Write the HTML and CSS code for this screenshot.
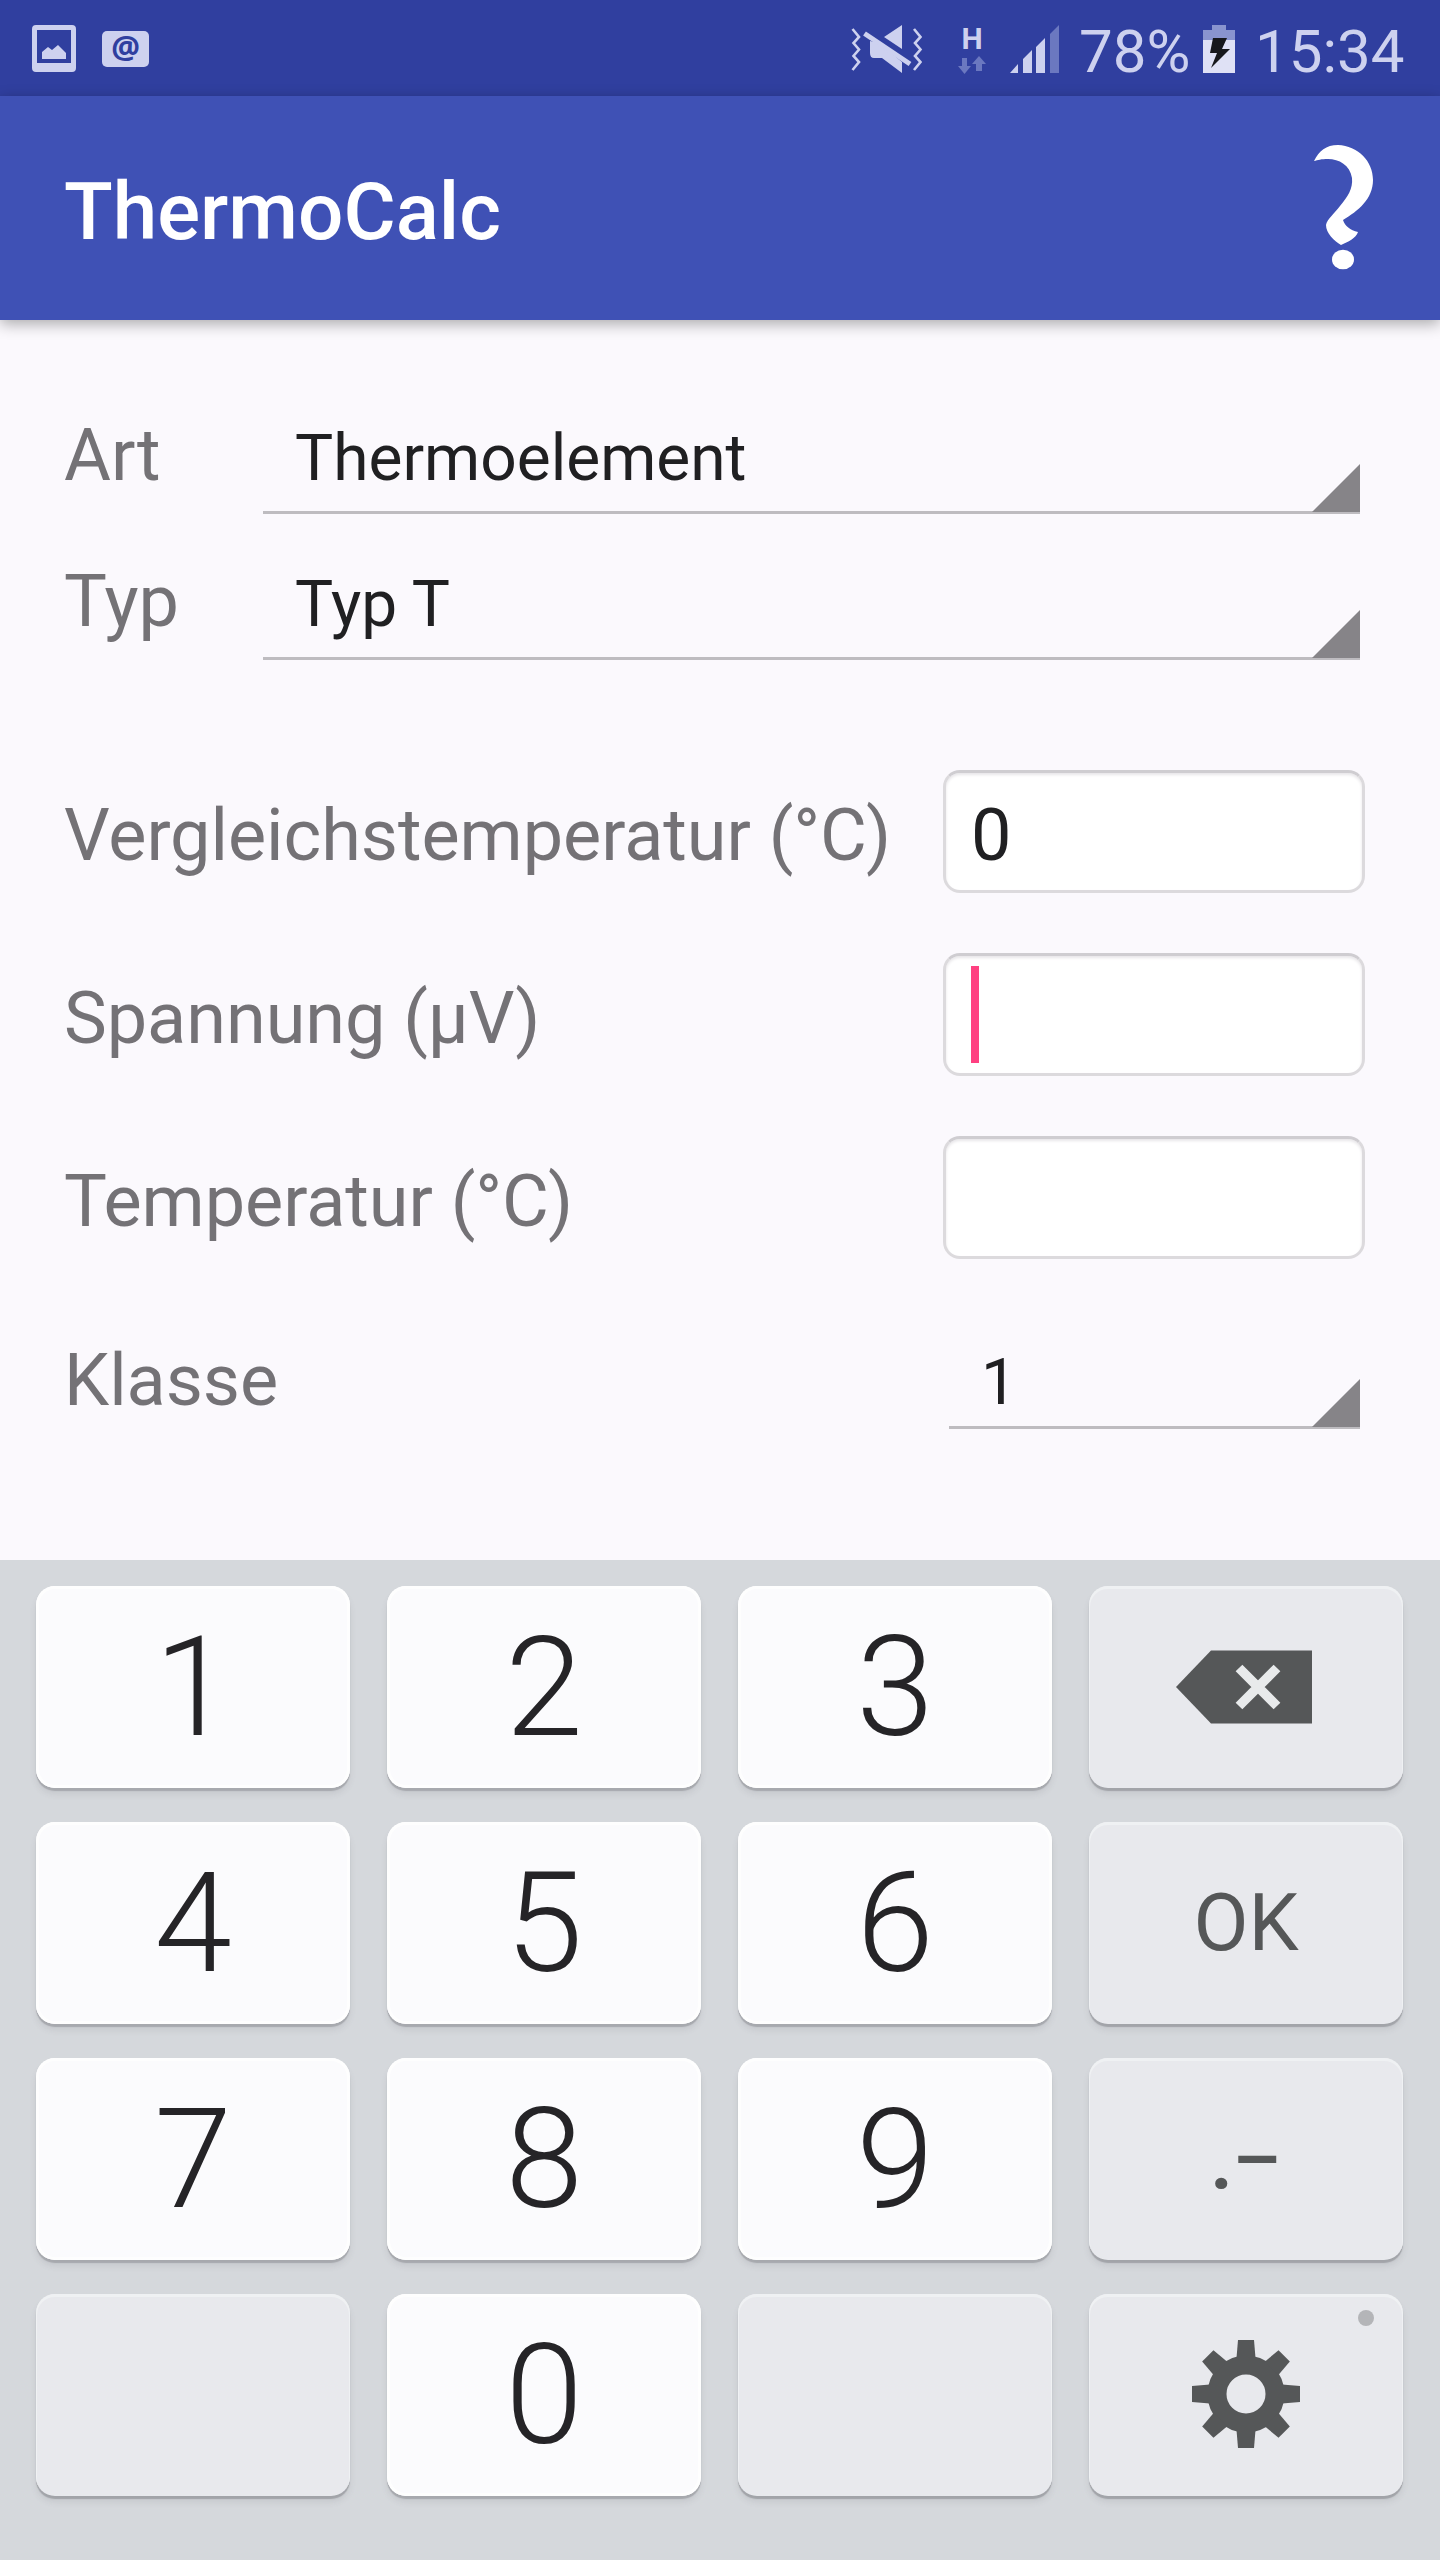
FILE: index.html
```html
<!DOCTYPE html>
<html lang="de">
<head>
<meta charset="utf-8">
<title>ThermoCalc</title>
<link rel="stylesheet" href="styles.css">
</head>
<body>
<div class="phone">
  <div class="status">
    <svg class="ic-picture" width="44" height="48" viewBox="0 0 44 48"><path fill-rule="evenodd" d="M4 0H40Q44 0 44 4V43Q44 47 40 47H4Q0 47 0 43V4Q0 0 4 0ZM5 5V38H39V5ZM10 34V27L16 22L20 25L26 20L34 28V34Z"/></svg>
    <div class="mail"><span>@</span></div>
    <svg class="ic-mute" width="72" height="50" viewBox="0 0 72 50">
      <path d="M1.500 4L8 12L2.500 18L8 24.500L2.500 31L8 37L1.500 45M63 4L69.500 12L64 18L69.500 24.500L64 31L69.500 37L63 45" fill="none" stroke="#cdd1ef" stroke-width="2.600"/>
      <path d="M51 0V24L33 12ZM19 16L28 18L51 37V48L31 33H23Q19 33 19 28Z"/>
      <path d="M13.500 8.500L59 39" stroke="#cdd1ef" stroke-width="5"/>
    </svg>
    <div class="net"><b>H</b>
      <svg width="30" height="18" viewBox="0 0 30 18"><path fill="#6b78c0" d="M5 2H10V10H14L7.500 18L1 10H5ZM19 15V8H15L22 0L29 8H25V15Z"/></svg>
    </div>
    <svg class="ic-signal" width="49" height="48" viewBox="0 0 49 48"><path d="M0 48L8 39V48ZM13 48V34L22 25V48ZM26 48V22L35 13V48Z"/><path fill="#6b78c0" d="M40 48V9L49 0V48Z"/></svg>
    <span class="pct">78%</span>
    <svg class="ic-batt" width="32" height="48" viewBox="0 0 32 48"><path fill="#8994cf" d="M9 0H23V5H32V15H0V5H9Z"/><path fill="#dfe1f5" d="M0 15H32V48H0Z"/><path fill="#17181c" d="M10 13H24L19 24H27L8 43L14 28H7Z"/></svg>
    <span class="time">15:34</span>
  </div>
  <header class="bar">
    <h1>ThermoCalc</h1>
    <svg class="help" width="62" height="128" viewBox="0 0 62 128"><path fill="#fff" d="M2 16C7 6 14 0 26 0C46 1 61 16 61 35C61 54 46 66 31 75C33 81 38 85 46 87C44 93 36 97 29 100C22 96 14 88 14 80C15 74 23 68 28 61C36 51 41 44 40 33C38 20 27 14 16 14C9 14 6 15 2 16Z"/><ellipse cx="31" cy="114.500" rx="11" ry="9.800" fill="#fff"/></svg>
  </header>
  <main class="form">
    <div class="row row-spin"><label>Art</label><div class="spinner wide"><span>Thermoelement</span></div></div>
    <div class="row row-spin"><label>Typ</label><div class="spinner wide"><span>Typ T</span></div></div>
    <div class="row row-in first"><label>Vergleichstemperatur (°C)</label><div class="field">0</div></div>
    <div class="row row-in"><label>Spannung (µV)</label><div class="field"><i class="caret"></i></div></div>
    <div class="row row-in"><label>Temperatur (°C)</label><div class="field"></div></div>
    <div class="row row-spin last"><label>Klasse</label><div class="spinner narrow"><span>1</span></div></div>
  </main>
  <section class="keys">
    <div class="key">1</div><div class="key">2</div><div class="key">3</div>
    <div class="key fn back"><svg width="136" height="74" viewBox="0 0 136 74"><path fill="#555758" d="M0 37L35 .500H136V73.500H35Z"/><path d="M63 18L101 56M101 18L63 56" stroke="#e8eaeb" stroke-width="9.500"/></svg></div>
    <div class="key">4</div><div class="key">5</div><div class="key">6</div>
    <div class="key fn ok">OK</div>
    <div class="key">7</div><div class="key">8</div><div class="key">9</div>
    <div class="key fn punct"><span class="dot">.</span><span class="dash">–</span></div>
    <div class="key fn"></div><div class="key">0</div><div class="key fn"></div>
    <div class="key fn gear"><svg width="110" height="110" viewBox="-55 -55 110 110" fill="#555758"><defs><path id="tooth" d="M-9.500 -36L-8 -54H8L9.500 -36Z"/></defs>
      <circle r="29" fill="none" stroke="#555758" stroke-width="19"/>
      <use href="#tooth"/><use href="#tooth" transform="rotate(45)"/><use href="#tooth" transform="rotate(90)"/><use href="#tooth" transform="rotate(135)"/><use href="#tooth" transform="rotate(180)"/><use href="#tooth" transform="rotate(225)"/><use href="#tooth" transform="rotate(270)"/><use href="#tooth" transform="rotate(315)"/></svg><i class="more"></i></div>
  </section>
</div>
</body>
</html>
```
FILE: styles.css
```css
* { box-sizing: border-box; }
body { margin: 0; background: #fbf9fd; font-family: Roboto, "Liberation Sans", sans-serif; }
.phone { width: 1440px; height: 2560px; display: flex; flex-direction: column; overflow: hidden; }

.status { height: 96px; flex: none; background: #303f9f; color: #cdd1ef; display: flex; align-items: flex-start; padding: 25px 0 0 32px; }
.status svg { fill: #cdd1ef; flex: none; }
.mail { width: 47px; height: 36px; margin: 6px 0 0 26px; background: #cdd1ef; border-radius: 5px; color: #303f9f; display: flex; justify-content: center; }
.mail span { font: 700 32px/31px "Noto Sans", Roboto, sans-serif; }
.ic-mute { margin-left: 702px; }
.net { width: 30px; margin-left: 34px; padding-top: 3px; display: flex; flex-direction: column; align-items: center; }
.net b { font-size: 30px; line-height: 21px; height: 28px; }
.ic-signal { margin-left: 23px; }
.pct, .time { font-size: 60px; line-height: 70px; height: 48px; margin-top: -8px; white-space: nowrap; }
.pct { width: 113px; margin-left: 20px; }
.ic-batt { margin-left: 11px; }
.time { margin-left: 20px; }

.bar { height: 224px; flex: none; background: #3f51b5; color: #fff; display: flex; justify-content: space-between; padding: 0 64px; position: relative; box-shadow: 0 4px 14px rgba(0,0,0,.32); }
.bar h1 { margin: 69px 0 0; font-weight: 500; font-size: 80px; line-height: 94px; }
.help { margin: 49px 2px 0 0; }

.form { height: 1240px; flex: none; padding: 88px 75px 0 64px; }
.row { display: flex; justify-content: space-between; }
.row label { font-size: 72px; line-height: 84px; letter-spacing: -.04px; color: #747276; white-space: nowrap; }
.row-spin { height: 146px; padding-right: 5px; }
.row-spin label { padding-top: 6px; }
.spinner { height: 106px; padding: 13px 0 0 32px; font-size: 64px; line-height: 76px; color: #202022; background: linear-gradient(#bebcc0, #bebcc0) left bottom / 100% 3px no-repeat; position: relative; }
.spinner::after { content: ""; position: absolute; right: 0; bottom: 2px; width: 48px; height: 48px; background: #868488; clip-path: polygon(100% 0, 100% 100%, 0 100%); }
.wide { width: 1097px; }
.narrow { width: 411px; }
.row-in { height: 183px; }
.row-in.first { margin-top: 70px; }
.row-in label { padding-top: 24px; }
.field { width: 422px; height: 123px; padding: 23px 0 0 25px; border: 3px solid #dcdadd; border-top-color: #cfcdd1; border-radius: 17px; background: #fff; font-size: 72px; line-height: 80px; color: #202022; box-shadow: inset 0 2px 3px #e8e6e9; }
.caret { display: block; width: 8px; height: 97px; margin: -13px 0 0 0; background: #ff4081; }
.last { margin-top: 4px; }
.last label { padding-top: 16px; }
.last .spinner { padding-top: 22px; }

.keys { flex: 1; background: #d5d8dc; display: grid; grid-template-columns: repeat(4, 314px); grid-auto-rows: 202px; gap: 34px 37px; padding: 26px 36px 0; align-content: start; }
.key { border-radius: 19px; background: #fbfbfd; color: #252427; font-weight: 300; font-size: 140px; line-height: 202px; display: flex; justify-content: center; align-items: center; box-shadow: inset 0 0 0 3px #fefefe, 0 3px 1px #a7a9ae, 0 6px 6px rgba(90,90,100,.12); position: relative; }
.fn { background: #e8e9ed; color: #555758; box-shadow: inset 0 2px 0 1px #eff1f3, 0 3px 1px #a2a4a9, 0 6px 6px rgba(90,90,100,.12); }
.back { padding-right: 4px; }
.ok { font-size: 80px; font-weight: 400; }
.punct { font-size: 76px; font-weight: 500; }
.dot { font-weight: 700; padding-top: 6px; }
.dash { padding-top: 2px; }
.gear svg { margin-top: -2px; }
.more { position: absolute; right: 29px; top: 16px; width: 16px; height: 16px; border-radius: 50%; background: #b4b5b8; }
```
